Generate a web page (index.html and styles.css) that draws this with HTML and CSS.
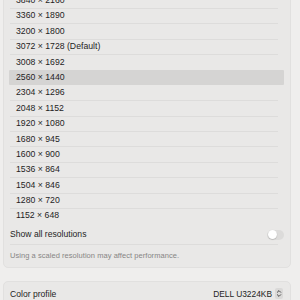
FILE: index.html
```
<!DOCTYPE html>
<html>
<head>
<meta charset="utf-8">
<link rel="stylesheet" href="styles.css">
</head>
<body>
<div class="page">
  <div class="card card-res">
    <div class="list">
      <div class="row">3840 × 2160</div>
      <div class="row">3360 × 1890</div>
      <div class="row">3200 × 1800</div>
      <div class="row">3072 × 1728 (Default)</div>
      <div class="row">3008 × 1692</div>
      <div class="row selected">2560 × 1440</div>
      <div class="row">2304 × 1296</div>
      <div class="row">2048 × 1152</div>
      <div class="row">1920 × 1080</div>
      <div class="row">1680 × 945</div>
      <div class="row">1600 × 900</div>
      <div class="row">1536 × 864</div>
      <div class="row">1504 × 846</div>
      <div class="row">1280 × 720</div>
      <div class="row last">1152 × 648</div>
    </div>
    <div class="setting">
      <span>Show all resolutions</span>
      <span class="toggle"><span class="knob"></span></span>
    </div>
    <div class="note">Using a scaled resolution may affect performance.</div>
  </div>
  <div class="card card-profile">
    <div class="setting plain">
      <span>Color profile</span>
      <span class="popup">DELL U3224KB
        <span class="stepper">
          <svg width="8" height="11" viewBox="0 0 8 11"><path d="M2.3 4.3 L4 2.6 L5.7 4.3 M2.3 6.7 L4 8.4 L5.7 6.7" fill="none" stroke="#3a3a3a" stroke-width="0.9" stroke-linecap="round" stroke-linejoin="round"/></svg>
        </span>
      </span>
    </div>
  </div>
</div>
</body>
</html>
```
FILE: styles.css
```
html, body {
  margin: 0;
  padding: 0;
  background: #efeeed;
  overflow: hidden;
}
body {
  font-family: "Liberation Sans", Arial, sans-serif;
  color: #1e1e1e;
  font-size: 8.7px;
}
.page {
  padding: 0 9px 0 3px;
}
.card {
  background: #e9e8e7;
  border: 1px solid #e1e0df;
  border-radius: 5px;
}
.card-res {
  margin-top: -12px;
  padding: 4px 6px 0 6px;
}
.list {
  margin-left: -1px;
}
.row {
  position: relative;
  height: 15.4px;
  line-height: 15.4px;
  padding-left: 7px;
  border-radius: 1px;
}
.row::after {
  content: "";
  position: absolute;
  left: 1px;
  right: 6px;
  bottom: -0.5px;
  height: 1px;
  background: #dddcdb;
}
.row.selected {
  background: #d5d4d3;
}
.row.selected::after,
.row.last::after {
  display: none;
}
.row:has(+ .selected)::after {
  display: none;
}
.setting {
  position: relative;
  display: flex;
  align-items: center;
  justify-content: space-between;
  height: 21px;
  font-size: 8.6px;
}
.card-res .setting::after {
  content: "";
  position: absolute;
  left: 0;
  right: 6px;
  bottom: 0;
  height: 1px;
  background: #dddcdb;
}
.toggle {
  display: flex;
  align-items: center;
  width: 17px;
  height: 10px;
  border-radius: 5px;
  background: #dcdbda;
  padding: 0 0.5px;
  box-sizing: border-box;
  margin-top: 1px;
}
.knob {
  width: 9px;
  height: 9px;
  border-radius: 50%;
  background: #ffffff;
  box-shadow: 0 0.5px 1px rgba(0,0,0,0.25);
}
.note {
  height: 22.5px;
  line-height: 22.5px;
  font-size: 7.5px;
  color: #878685;
  letter-spacing: 0.05px;
}
.card-profile {
  margin-top: 12.5px;
  padding: 0 6px;
}
.setting.plain {
  height: 24px;
}
.popup {
  display: flex;
  align-items: center;
  gap: 3px;
  font-size: 8.4px;
  color: #1e1e1e;
  margin-right: 1px;
}
.stepper {
  display: flex;
  width: 8px;
  height: 11px;
  border-radius: 2px;
  background: #dad9d8;
}
```
